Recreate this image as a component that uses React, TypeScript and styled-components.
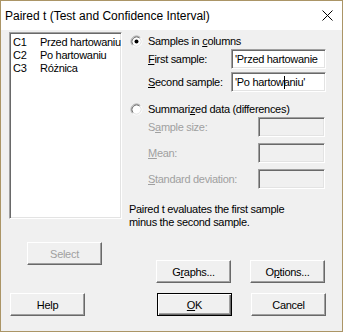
import React from "react";
import styled, { createGlobalStyle, css } from "styled-components";

const GlobalStyle = createGlobalStyle`
  html, body {
    margin: 0;
    padding: 0;
    background: #f0f0f0;
  }
`;

const Window = styled.div`
  width: 343px;
  height: 332px;
  box-sizing: border-box;
  border: 1px solid #ab9566;
  background: #f0f0f0;
  display: flex;
  flex-direction: column;
  font-family: "Liberation Sans", Arial, sans-serif;
  font-size: 11px;
  letter-spacing: -0.3px;
  color: #000;
  overflow: hidden;
`;

const TitleBar = styled.div`
  height: 29px;
  flex: none;
  background: #fff;
  display: flex;
  align-items: center;
  justify-content: space-between;
  padding: 0 9px 0 4px;
`;

const Title = styled.span`
  font-size: 12px;
  letter-spacing: 0;
  padding-top: 1px;
`;

const Body = styled.div`
  flex: 1;
  display: flex;
  flex-direction: column;
  padding: 2px 8px 0 8px;
`;

const MainRow = styled.div`
  display: flex;
  align-items: flex-start;
`;

const LeftCol = styled.div`
  width: 113px;
  display: flex;
  flex-direction: column;
`;

const sunken = css`
  box-sizing: border-box;
  border: 1px solid;
  border-color: #a0a0a0 #fff #fff #a0a0a0;
  box-shadow: inset 1px 1px #696969, inset -1px -1px #e3e3e3;
`;

const ListBox = styled.div`
  ${sunken};
  height: 187px;
  background: #fff;
  padding: 3px 0 0 3px;
  overflow: hidden;
`;

const ListRow = styled.div`
  display: grid;
  grid-template-columns: 27px 1fr;
  height: 13px;
  line-height: 13px;
  white-space: nowrap;
  overflow: hidden;
`;

const RightCol = styled.div`
  margin-left: 7px;
  flex: 1;
  display: flex;
  flex-direction: column;
`;

const RadioRow = styled.label<{ $top: number }>`
  display: flex;
  align-items: center;
  gap: 5px;
  height: 14px;
  margin-top: ${(p) => p.$top}px;
  padding-left: 1px;
`;

const FieldGrid = styled.div<{ $labelWidth: number; $rowGap: number }>`
  display: grid;
  grid-template-columns: ${(p) => p.$labelWidth}px auto;
  grid-auto-rows: 20px;
  row-gap: ${(p) => p.$rowGap}px;
  align-items: center;
  justify-content: start;
  padding-left: 19px;
  margin-top: 1px;
`;

const FieldLabel = styled.span<{ $disabled?: boolean }>`
  color: ${(p) => (p.$disabled ? "#a0a0a0" : "#000")};
  white-space: nowrap;
`;

const TextBox = styled.div<{ $disabled?: boolean; $width?: number }>`
  ${sunken};
  height: 20px;
  width: ${(p) => p.$width ?? 95}px;
  background: ${(p) => (p.$disabled ? "#f0f0f0" : "#fff")};
  padding: 0 0 0 3px;
  line-height: 18px;
  white-space: nowrap;
  overflow: hidden;
`;

const Caret = styled.span`
  display: inline-block;
  width: 1px;
  height: 13px;
  margin-right: -1px;
  background: #000;
  vertical-align: -3px;
`;

const Note = styled.p`
  margin: 14px 0 0 0;
  line-height: 13px;
`;

const Acc = styled.span`
  text-decoration: underline;
  text-underline-offset: 1px;
`;

const Button = styled.button<{ $default?: boolean }>`
  box-sizing: border-box;
  width: 75px;
  height: 23px;
  padding: 0;
  font: inherit;
  letter-spacing: inherit;
  color: ${(p) => (p.disabled ? "#a0a0a0" : "#000")};
  background: #f0f0f0;
  border: 1px solid;
  border-color: #fff #696969 #696969 #fff;
  box-shadow: inset -1px -1px #a0a0a0, inset 1px 1px #f0f0f0;
  ${(p) =>
    p.$default &&
    css`
      border-color: #000;
      box-shadow: inset 1px 1px #fff, inset -1px -1px #696969,
        inset -2px -2px #a0a0a0;
    `}
`;

const SelectButton = styled(Button)`
  margin: 23px 0 0 18px;
`;

const ButtonRow = styled.div<{ $top: number; $left: number }>`
  display: flex;
  gap: 19px;
  margin-top: ${(p) => p.$top}px;
  padding-left: ${(p) => p.$left}px;
`;

const BottomRow = styled.div`
  display: flex;
  margin-top: 10px;
  padding-left: 1px;
`;

const HelpButton = styled(Button)`
  margin-right: 72px;
`;

const BottomRight = styled.div`
  display: flex;
  gap: 19px;
`;

function Radio({ checked }: { checked?: boolean }) {
  return (
    <svg width="13" height="13" viewBox="0 0 13 13">
      <circle cx="6.5" cy="6.5" r="5" fill="#fff" />
      <path d="M2.61 10.39 A5.5 5.5 0 0 1 10.39 2.61" fill="none" stroke="#a0a0a0" />
      <path d="M10.39 2.61 A5.5 5.5 0 0 1 2.61 10.39" fill="none" stroke="#fff" />
      <path d="M3.32 9.68 A4.5 4.5 0 0 1 9.68 3.32" fill="none" stroke="#696969" />
      <path d="M9.68 3.32 A4.5 4.5 0 0 1 3.32 9.68" fill="none" stroke="#e3e3e3" />
      {checked && <circle cx="6.5" cy="6.5" r="2" fill="#000" />}
    </svg>
  );
}

function CloseIcon() {
  return (
    <svg width="11" height="11" viewBox="0 0 11 11">
      <path d="M0.5 0.5 L10.5 10.5 M10.5 0.5 L0.5 10.5" stroke="#000" strokeWidth="1" />
    </svg>
  );
}

const columns = [
  { id: "C1", name: "Przed hartowaniu" },
  { id: "C2", name: "Po hartowaniu" },
  { id: "C3", name: "Różnica" },
];

export default function App() {
  return (
    <>
      <GlobalStyle />
      <Window>
        <TitleBar>
          <Title>Paired t (Test and Confidence Interval)</Title>
          <CloseIcon />
        </TitleBar>
        <Body>
          <MainRow>
            <LeftCol>
              <ListBox>
                {columns.map((c) => (
                  <ListRow key={c.id}>
                    <span>{c.id}</span>
                    <span>{c.name}</span>
                  </ListRow>
                ))}
              </ListBox>
              <SelectButton disabled>Select</SelectButton>
            </LeftCol>
            <RightCol>
              <RadioRow $top={2}>
                <Radio checked />
                <span>
                  Samples in <Acc>c</Acc>olumns
                </span>
              </RadioRow>
              <FieldGrid $labelWidth={83} $rowGap={3}>
                <FieldLabel>
                  <Acc>F</Acc>irst sample:
                </FieldLabel>
                <TextBox>'Przed hartowanie</TextBox>
                <FieldLabel>
                  <Acc>S</Acc>econd sample:
                </FieldLabel>
                <TextBox>
                  'Po hartow<Caret />aniu'
                </TextBox>
              </FieldGrid>
              <RadioRow $top={10}>
                <Radio />
                <span>
                  Summari<Acc>z</Acc>ed data (differences)
                </span>
              </RadioRow>
              <FieldGrid $labelWidth={110} $rowGap={6}>
                <FieldLabel $disabled>
                  S<Acc>a</Acc>mple size:
                </FieldLabel>
                <TextBox $disabled $width={67} />
                <FieldLabel $disabled>
                  <Acc>M</Acc>ean:
                </FieldLabel>
                <TextBox $disabled $width={67} />
                <FieldLabel $disabled>
                  <Acc>S</Acc>tandard deviation:
                </FieldLabel>
                <TextBox $disabled $width={67} />
              </FieldGrid>
              <Note>
                Paired t evaluates the first sample
                <br />
                minus the second sample.
              </Note>
              <ButtonRow $top={31} $left={27}>
                <Button>
                  G<Acc>r</Acc>aphs...
                </Button>
                <Button>
                  O<Acc>p</Acc>tions...
                </Button>
              </ButtonRow>
            </RightCol>
          </MainRow>
          <BottomRow>
            <HelpButton>Help</HelpButton>
            <BottomRight>
              <Button $default>
                <Acc>O</Acc>K
              </Button>
              <Button>Cancel</Button>
            </BottomRight>
          </BottomRow>
        </Body>
      </Window>
    </>
  );
}
